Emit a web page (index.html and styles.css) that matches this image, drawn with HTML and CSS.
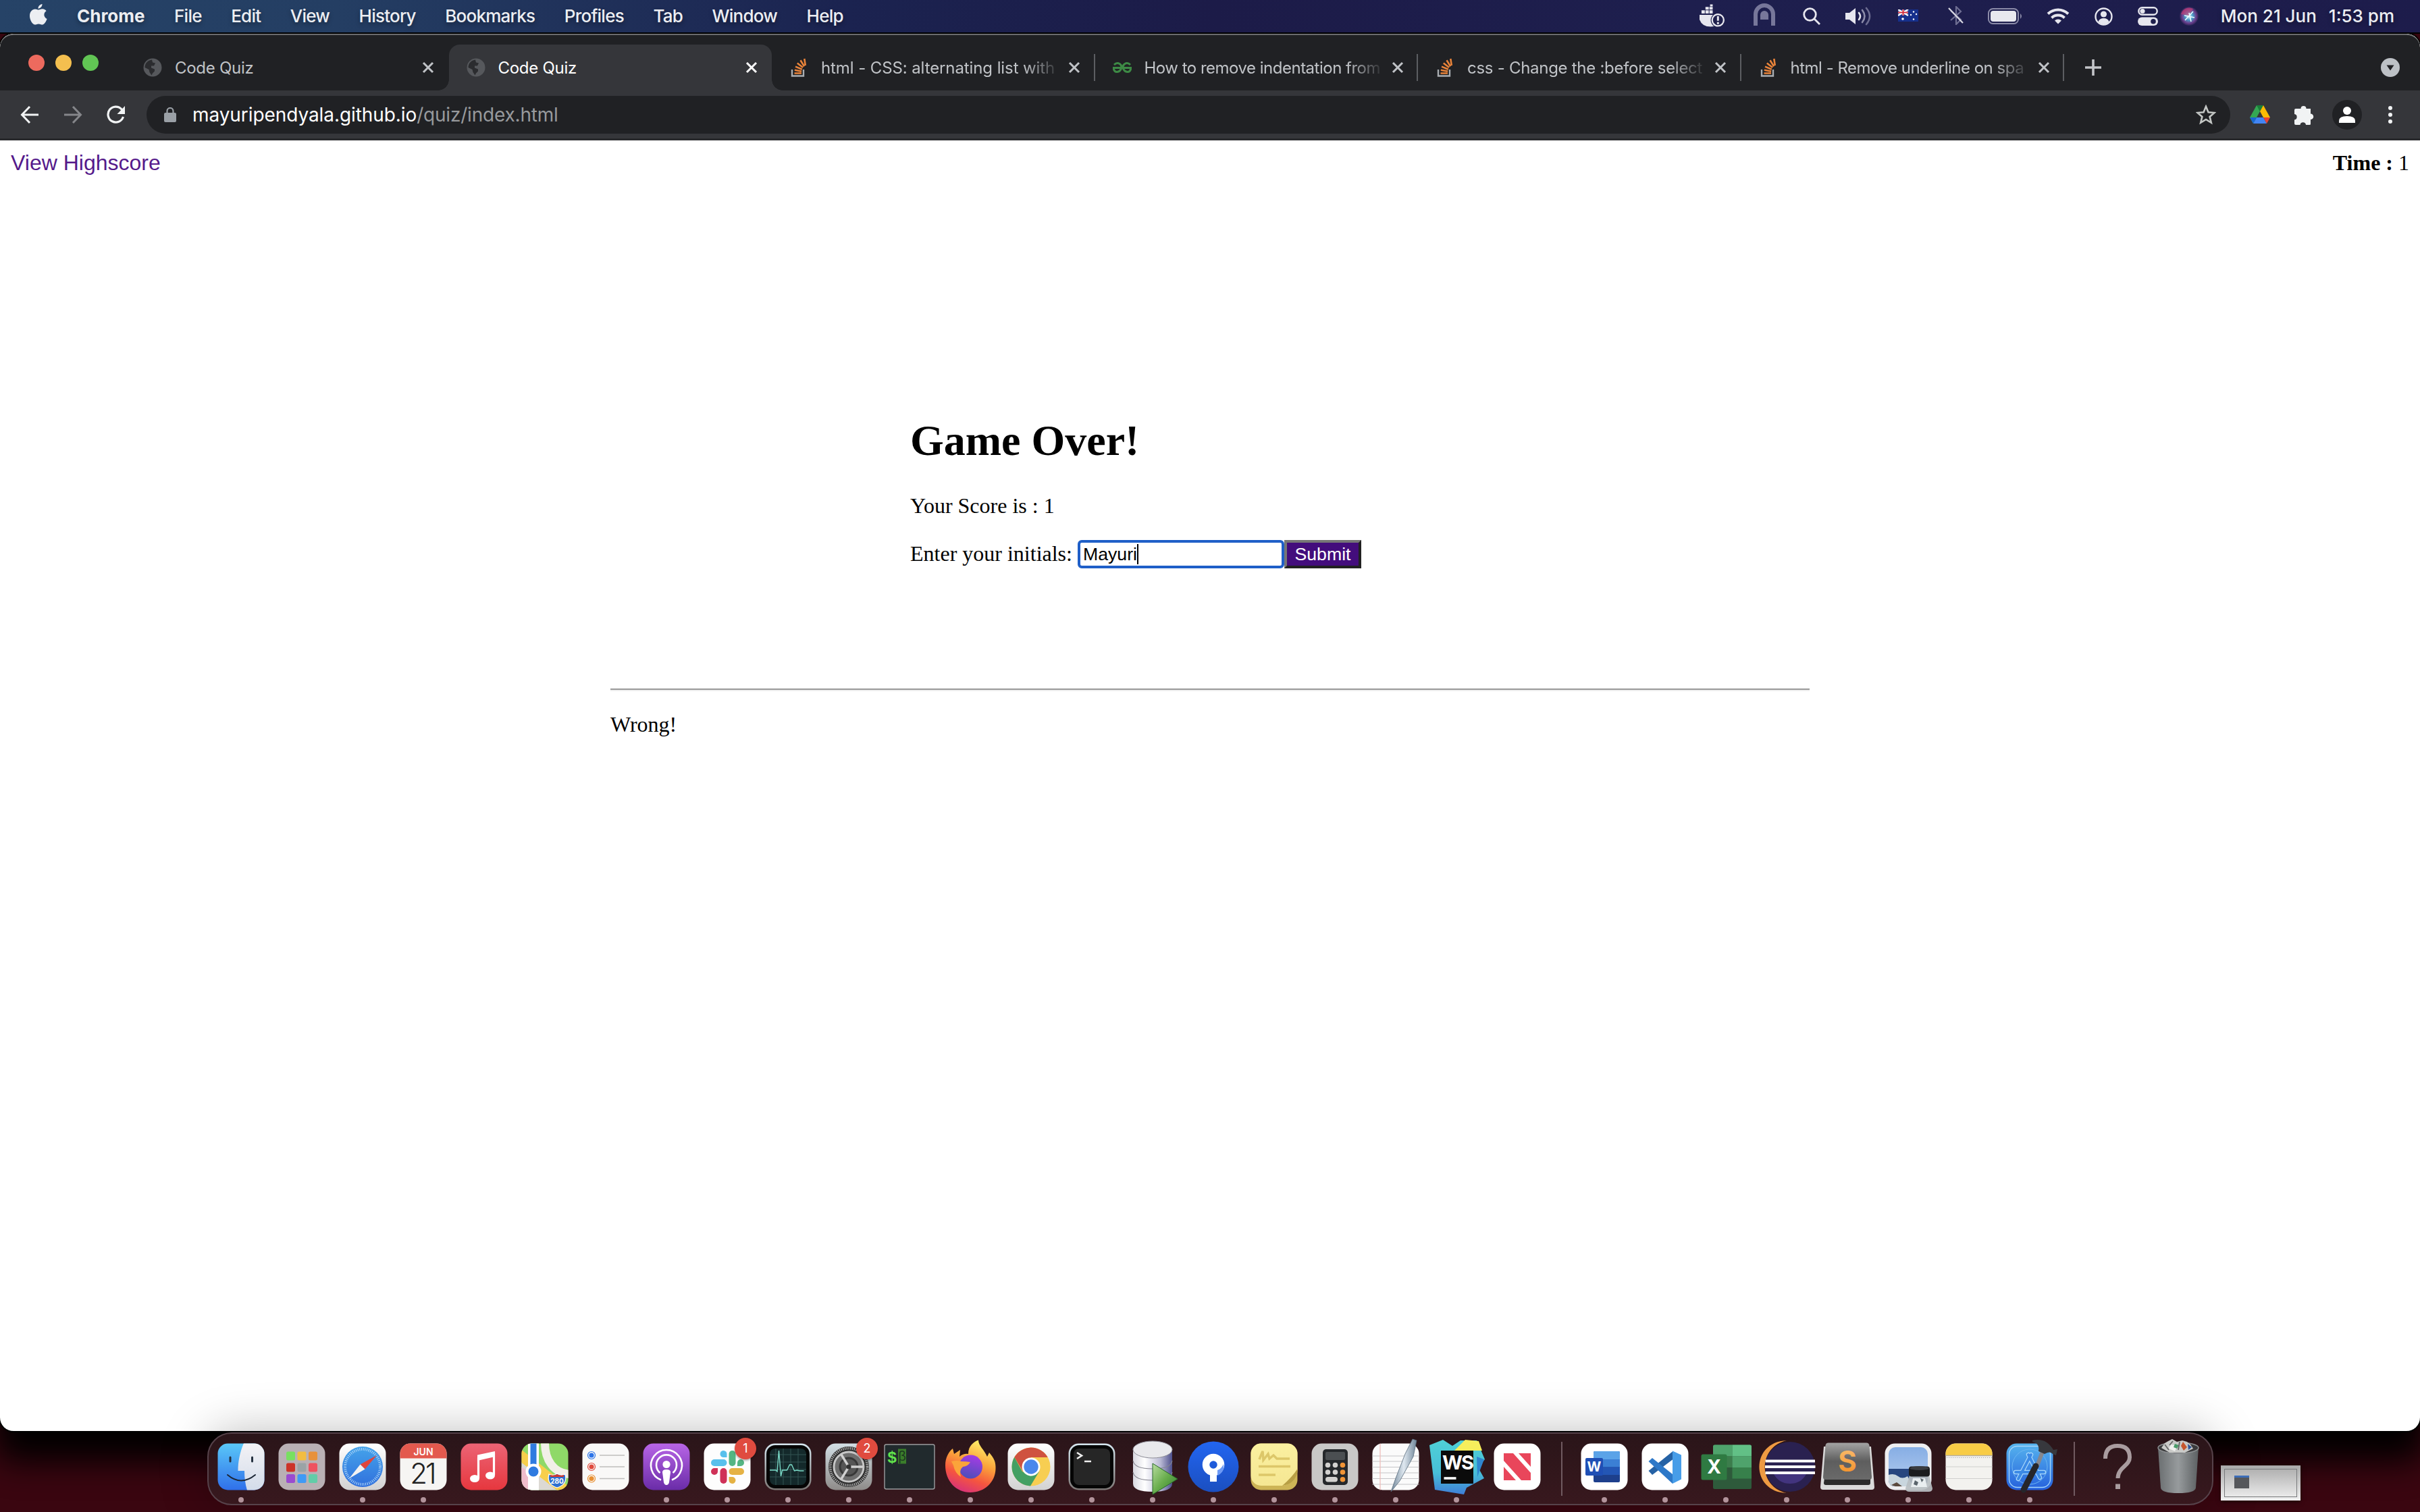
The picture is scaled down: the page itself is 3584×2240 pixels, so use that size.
FILE: index.html
```html
<!DOCTYPE html>
<html lang="en">
<head>
<meta charset="utf-8">
<title>Code Quiz</title>
<link rel="stylesheet" href="styles.css">
</head>
<body>
<svg class="defs" width="0" height="0">
  <defs>
    <linearGradient id="gFinder" x1="0" y1="0" x2="0" y2="1"><stop offset="0" stop-color="#5ac8f8"/><stop offset="1" stop-color="#2f6fea"/></linearGradient>
    <linearGradient id="gFace" x1="0" y1="0" x2="0" y2="1"><stop offset="0" stop-color="#f3f2f5"/><stop offset="1" stop-color="#d3dcea"/></linearGradient>
    <linearGradient id="gSilver" x1="0" y1="0" x2="0" y2="1"><stop offset="0" stop-color="#ffffff"/><stop offset="1" stop-color="#d2d2d2"/></linearGradient>
    <linearGradient id="gSafari" x1="0" y1="0" x2="0" y2="1"><stop offset="0" stop-color="#45a3ea"/><stop offset="1" stop-color="#3070dd"/></linearGradient>
    <linearGradient id="gRed" x1="0" y1="0" x2="0" y2="1"><stop offset="0" stop-color="#ec6475"/><stop offset="1" stop-color="#e6373e"/></linearGradient>
    <linearGradient id="gPod" x1="0" y1="0" x2="0" y2="1"><stop offset="0" stop-color="#b865e6"/><stop offset="1" stop-color="#6a2ca8"/></linearGradient>
    <linearGradient id="gRim" x1="0" y1="0" x2="0" y2="1"><stop offset="0" stop-color="#d5e6ef"/><stop offset="1" stop-color="#7b7674"/></linearGradient>
    <linearGradient id="gPref" x1="0" y1="0" x2="0" y2="1"><stop offset="0" stop-color="#d3dfe5"/><stop offset="1" stop-color="#8e8b89"/></linearGradient>
    <linearGradient id="gFox" x1=".7" y1="0" x2=".3" y2="1"><stop offset="0" stop-color="#fff36b"/><stop offset=".4" stop-color="#fba23a"/><stop offset=".7" stop-color="#f5553f"/><stop offset="1" stop-color="#d6307c"/></linearGradient>
    <linearGradient id="gFoxIn" x1="0.6" y1="0" x2=".3" y2="1"><stop offset="0" stop-color="#a53be4"/><stop offset="1" stop-color="#4a4fb8"/></linearGradient>
    <linearGradient id="gDb" x1="0" y1="0" x2="1" y2="0"><stop offset="0" stop-color="#d8d8e0"/><stop offset=".3" stop-color="#ffffff"/><stop offset=".7" stop-color="#b9b9d4"/><stop offset="1" stop-color="#4d4f8c"/></linearGradient>
    <linearGradient id="gPlay" x1="0" y1="0" x2="1" y2="1"><stop offset="0" stop-color="#b8dca0"/><stop offset=".5" stop-color="#68ad4c"/><stop offset="1" stop-color="#2c7a2c"/></linearGradient>
    <linearGradient id="gTree" x1="0" y1="0" x2="0" y2="1"><stop offset="0" stop-color="#2265f0"/><stop offset="1" stop-color="#1b4fc0"/></linearGradient>
    <linearGradient id="gNote" x1="0" y1="0" x2="0" y2="1"><stop offset="0" stop-color="#fbf0a0"/><stop offset="1" stop-color="#f5e793"/></linearGradient>
    <linearGradient id="gPen" x1="0" y1="0" x2="1" y2="0"><stop offset="0" stop-color="#6f8598"/><stop offset=".5" stop-color="#dfe8f0"/><stop offset="1" stop-color="#6f8598"/></linearGradient>
    <linearGradient id="gWs" x1="0" y1="0" x2="0" y2="1"><stop offset="0" stop-color="#4fd0d6"/><stop offset=".6" stop-color="#48bfd8"/><stop offset="1" stop-color="#3f7fd8"/></linearGradient>
    <linearGradient id="gSub" x1="0" y1="0" x2="0" y2="1"><stop offset="0" stop-color="#a3a3a3"/><stop offset=".5" stop-color="#5e5e5e"/><stop offset="1" stop-color="#6a6a6a"/></linearGradient>
    <linearGradient id="gSubS" x1="0" y1="0" x2="0" y2="1"><stop offset="0" stop-color="#fbc276"/><stop offset="1" stop-color="#f08a20"/></linearGradient>
    <linearGradient id="gSky" x1="0" y1="0" x2="0" y2="1"><stop offset="0" stop-color="#87aee4"/><stop offset="1" stop-color="#b4cdf0"/></linearGradient>
    <linearGradient id="gXc" x1="0" y1="0" x2="0" y2="1"><stop offset="0" stop-color="#56b4ee"/><stop offset="1" stop-color="#2560dc"/></linearGradient>
    <linearGradient id="gBin" x1="0" y1="0" x2="1" y2="0"><stop offset="0" stop-color="#6a6e70"/><stop offset=".5" stop-color="#979b9d"/><stop offset="1" stop-color="#5c6062"/></linearGradient>
    <radialGradient id="gSiri"><stop offset="0" stop-color="#d8f4ff"/><stop offset=".4" stop-color="#4a9dc8"/><stop offset=".75" stop-color="#6b3d8c"/><stop offset="1" stop-color="#2a2455"/></radialGradient>
    <clipPath id="tile"><rect x="10.500" y="10.500" width="69" height="69" rx="15"/></clipPath>
    <symbol id="globe" viewBox="0 0 28 28"><circle cx="14" cy="14" r="13.500" fill="#56585c"/><path d="M13 2.500c-6 .8-10.500 5.300-10.500 11.500l6 3 1 4 3 4.500 1.500-3 3-3v-3l-5-2v-3h4l2-4-4-1z" fill="#2b2c2f"/></symbol>
    <symbol id="close" viewBox="0 0 20 20"><path d="M3 3l14 14M17 3L3 17" stroke="currentColor" stroke-width="3" fill="none"/></symbol>
    <symbol id="stack" viewBox="0 0 28 28"><path d="M4 17v9.500h17V17" fill="none" stroke="#a9adb1" stroke-width="2.400"/><path d="M7.500 22.500h10.500M7.800 17.800l10.300 2M9 12.600l9.800 4.200M11.800 7.500l8.300 6.600M16.500 3.200l5.600 9M22.300 1l1.500 10" stroke="#e8833a" stroke-width="2.600" fill="none"/></symbol>
  </defs>
</svg>

<div class="desktop">
  <header class="menubar">
    <svg class="apple" viewBox="0 0 26 32"><path d="M18.500 0c.2 3-2.600 6.800-6 6.700C12.200 3.600 15.200.4 18.500 0zM13 8.600c1.500 0 3.200-1.500 6-1.300 2.600.2 4.500 1.300 5.600 3-4.800 3-4 9.600 1 11.600-1.300 3.900-4.200 8.600-7.100 8.700-2 0-2.900-1.200-5.300-1.200-2.400 0-3.400 1.200-5.300 1.200C4 30.500 0 23.500 0 17.500c0-6.200 4-10 8-10 2.300 0 3.700 1.100 5 1.100z"/></svg>
    <nav class="menus">
      <span class="app">Chrome</span><span>File</span><span>Edit</span><span>View</span><span>History</span><span>Bookmarks</span><span>Profiles</span><span>Tab</span><span>Window</span><span>Help</span>
    </nav>
    <div class="status">
      <svg class="s-docker" viewBox="0 0 40 36"><g fill="#e6e6ee"><path d="M0 16h30l-4 13q-2 5-9 5-13 0-17-11z"/><path d="M3 9h5v5H3zM9 9h5v5H9zM15 9h5v5h-5zM9 4h5v4H9zM15 4h5v4h-5zM16 0h4v3h-4z"/></g><circle cx="28" cy="24" r="11" fill="#1e1f4c"/><circle cx="28" cy="24" r="8.800" fill="none" stroke="#e6e6ee" stroke-width="2.400"/><path d="M28 18v7M28 27v3" stroke="#e6e6ee" stroke-width="3"/></svg>
      <svg class="s-arch" viewBox="0 0 34 34"><path d="M4 33V16a13 13 0 0 1 26 0v17" fill="none" stroke="#77779a" stroke-width="6"/><path d="M11 24v-7a6 6 0 0 1 12 0v7z" fill="#77779a"/></svg>
      <svg class="s-search" viewBox="0 0 26 26"><circle cx="10.500" cy="10.500" r="8.800"/><path d="M17 17l8 8"/></svg>
      <svg class="s-vol" viewBox="0 0 38 28"><path d="M0 9h6l9-7v24l-9-7H0z" fill="#e6e6ee"/><g fill="none" stroke-width="2.600" stroke-linecap="round"><path d="M20 9q4 5 0 10" stroke="#e6e6ee"/><path d="M25 5q7 9 0 18" stroke="#8d8daa"/><path d="M31 2q10 12 0 24" stroke="#6c6c90"/></g></svg>
      <svg class="s-flag" viewBox="0 0 30 18"><path d="M0 0h30v18H0z" fill="#16308c"/><path d="M0 0l15 9M15 0L0 9" stroke="#fff" stroke-width="2.500"/><path d="M7.500 0v9M0 4.500h15" stroke="#fff" stroke-width="3"/><path d="M7.500 0v9M0 4.500h15" stroke="#d02c3c" stroke-width="2"/><g fill="#fff"><circle cx="7" cy="14" r="1.800"/><circle cx="23" cy="3.500" r="1.200"/><circle cx="23" cy="14.500" r="1.200"/><circle cx="19" cy="8" r="1.200"/><circle cx="27" cy="7" r="1.200"/></g></svg>
      <svg class="s-bt" viewBox="0 0 24 28"><path d="M4 7l15 13-7 7V1l7 7L4 21" fill="none" stroke="#6e6e92" stroke-width="2.200"/><path d="M1 3l21 22" stroke="#d8d8e2" stroke-width="2.200"/></svg>
      <svg class="s-bat" viewBox="0 0 52 24"><rect x="1" y="1" width="44" height="22" rx="6.500" fill="none" stroke="#8b8ba8" stroke-width="2"/><rect x="4" y="4" width="38" height="16" rx="4" fill="#e8e8ee"/><path d="M48 8q4 4 0 8z" fill="#8b8ba8"/></svg>
      <svg class="s-wifi" viewBox="0 0 34 25"><g fill="none" stroke="#e6e6ee" stroke-width="4"><path d="M2 9.500a21.500 21.500 0 0 1 30 0"/><path d="M7.500 15.500a13.500 13.500 0 0 1 19 0"/></g><path d="M17 24.500l-5-5a7 7 0 0 1 10 0z" fill="#e6e6ee"/></svg>
      <svg class="s-user" viewBox="0 0 27 27"><circle cx="13.500" cy="13.500" r="12" fill="none" stroke="#e6e6ee" stroke-width="2.400"/><circle cx="13.500" cy="10" r="4.600" fill="#e6e6ee"/><path d="M5.500 21q2-5 8-5t8 5q-3 4-8 4t-8-4z" fill="#e6e6ee"/></svg>
      <svg class="s-cc" viewBox="0 0 30 28"><rect x="1.300" y="1.300" width="27.400" height="10.400" rx="5.200" fill="none" stroke="#e6e6ee" stroke-width="2.400"/><circle cx="7" cy="6.500" r="3.600" fill="#e6e6ee"/><rect y="15.500" width="30" height="12.500" rx="6.200" fill="#e6e6ee"/><circle cx="23" cy="21.700" r="3.800" fill="#1e1f4c"/></svg>
      <svg class="s-siri" viewBox="0 0 28 28"><circle cx="14" cy="14" r="14" fill="url(#gSiri)"/><path d="M2 11a12.500 12.500 0 0 1 18-8l-6 10z" fill="#c83c72" opacity=".65"/><path d="M8 20L20 7M7 13l15 3M14 9l3 13" stroke="#e8fbff" stroke-width="1.600"/></svg>
      <span class="date">Mon 21 Jun</span><span class="clock">1:53 pm</span>
    </div>
  </header>

  <main class="window">
    <div class="tabstrip">
      <div class="lights"><i class="red"></i><i class="yellow"></i><i class="green"></i></div>
      <div class="tab"><svg class="fav"><use href="#globe"/></svg><span class="title">Code Quiz</span><svg class="x"><use href="#close"/></svg></div>
      <div class="tab active"><svg class="fav"><use href="#globe"/></svg><span class="title">Code Quiz</span><svg class="x"><use href="#close"/></svg></div>
      <div class="tab sep"><svg class="fav"><use href="#stack"/></svg><span class="title t-wide">html - CSS: alternating list with</span><svg class="x"><use href="#close"/></svg></div>
      <div class="tab sep"><svg class="fav" viewBox="0 0 28 28"><g fill="none" stroke="#3d8a45" stroke-width="3"><path d="M2 10q4-4 8-1.500t2.500 7-6 5T1 14.500h11.500"/><path d="M26 10q-4-4-8-1.500t-2.500 7 6 5 5.500-6H15.500"/></g></svg><span class="title t-tight">How to remove indentation from</span><svg class="x"><use href="#close"/></svg></div>
      <div class="tab sep"><svg class="fav"><use href="#stack"/></svg><span class="title">css - Change the :before select</span><svg class="x"><use href="#close"/></svg></div>
      <div class="tab sep"><svg class="fav"><use href="#stack"/></svg><span class="title t-tight">html - Remove underline on spa</span><svg class="x"><use href="#close"/></svg></div>
      <svg class="plus" viewBox="0 0 26 26"><path d="M13 1v24M1 13h24" stroke="#c3c5c9" stroke-width="3.600"/></svg>
      <svg class="search-tabs" viewBox="0 0 28 28"><circle cx="14" cy="14" r="14" fill="#bdc1c6"/><path d="M8.500 10.500h11L14 18.500z" fill="#202124"/></svg>
    </div>
    <div class="toolbar">
      <svg class="nav" viewBox="0 0 28 28"><path d="M27 14H3M14 2L2.500 14 14 26" fill="none" stroke="#f1f3f4" stroke-width="3"/></svg>
      <svg class="nav fwd" viewBox="0 0 28 28"><path d="M1 14h24M14 2l11.500 12L14 26" fill="none" stroke="#85868a" stroke-width="3"/></svg>
      <svg class="nav rel" viewBox="0 0 28 28"><path d="M24.500 17A11.500 11.500 0 1 1 22 5.800L25 9" fill="none" stroke="#f1f3f4" stroke-width="3.200"/><path d="M27 1v12H15.500z" fill="#f1f3f4"/></svg>
      <div class="omnibox">
        <svg class="lock" viewBox="0 0 18 22"><rect y="8" width="18" height="14" rx="2" fill="#9aa0a6"/><path d="M4.500 9V5.500a4.500 4.500 0 0 1 9 0V9" fill="none" stroke="#9aa0a6" stroke-width="2.200"/></svg>
        <span class="url">mayuripendyala.github.io<span class="path">/quiz/index.html</span></span>
        <svg class="star" viewBox="0 0 30 30"><path d="M15 2.800l3.500 8.500 9 .7-6.900 5.900 2.200 8.900L15 22l-7.800 4.800 2.200-8.900L2.500 12l9-.7z" fill="none" stroke="#c4c7c5" stroke-width="2.600"/></svg>
      </div>
      <svg class="drive" viewBox="0 0 30 27"><path d="M10 0h10l-5 9z" fill="#188038"/><path d="M10 0l5 9L5 27 0 18z" fill="#34a853"/><path d="M20 0l10 18H20L15 9z" fill="#fbbc04"/><path d="M10 18h10l5 9H5z" fill="#4285f4"/><path d="M0 18h10L5 27z" fill="#1967d2"/><path d="M20 18h10l-5 9z" fill="#ea4335"/></svg>
      <svg class="puzzle" viewBox="0 0 30 30"><path d="M3 6h7.500a4 4 0 0 1 8 0H25v7.500a4.200 4.200 0 0 1 0 8.500v6.500q0 1.500-1.500 1.500H18a4.300 4.300 0 0 0-8.500 0H3q-2 0-2-2v-5.500a4.300 4.300 0 0 0 0-8.500V8q0-2 2-2z" fill="#f1f3f4"/></svg>
      <svg class="avatar" viewBox="0 0 44 44"><circle cx="22" cy="22" r="22" fill="#202124"/><circle cx="22" cy="16" r="6" fill="#fff"/><path d="M10 34v-3q0-7 12-7t12 7v3z" fill="#fff"/></svg>
      <svg class="dots" viewBox="0 0 8 28"><g fill="#f1f3f4"><circle cx="4" cy="4" r="3"/><circle cx="4" cy="14" r="3"/><circle cx="4" cy="24" r="3"/></g></svg>
    </div>
    <section class="page">
      <div class="pagehead"><a class="high">View Highscore</a><span class="time"><b>Time :</b> 1</span></div>
      <div class="result">
        <h1>Game Over!</h1>
        <p>Your Score is : 1</p>
        <div class="form"><label>Enter your initials:</label><div class="field">Mayuri<i class="caret"></i></div><button class="submit">Submit</button></div>
      </div>
      <div class="verdict"><hr><p>Wrong!</p></div>
    </section>
  </main>

  <footer class="bottom">
    <div class="dock">
      <div class="item run"><svg viewBox="0 0 90 90"><g clip-path="url(#tile)"><path d="M10 10h70v70H10z" fill="url(#gFinder)"/><path d="M49 10C43 24 40.500 38 40.500 51H50q0 16 4 29h26V10z" fill="url(#gFace)"/></g><path d="M29 31v6M61.500 31v6" stroke="#24303f" stroke-width="3" stroke-linecap="round"/><path d="M25 57q20 17 41 0" fill="none" stroke="#1c2736" stroke-width="2" stroke-linecap="round"/></svg></div>
      <div class="item"><svg viewBox="0 0 90 90"><rect x="10.500" y="10.500" width="69" height="69" rx="15" fill="#b9b0b4"/><g><rect x="22" y="22.500" width="13" height="13" rx="2.500" fill="#78e060"/><rect x="38.500" y="22.500" width="13" height="13" rx="2.500" fill="#f2bd42"/><rect x="55" y="22.500" width="13" height="13" rx="2.500" fill="#e8913a"/><rect x="22" y="39.500" width="13" height="13" rx="2.500" fill="#cc3328"/><rect x="38.500" y="39.500" width="13" height="13" rx="2.500" fill="#9ba3a6"/><rect x="55" y="39.500" width="13" height="13" rx="2.500" fill="#ee5260"/><rect x="22" y="56" width="13" height="13" rx="2.500" fill="#9a4bd0"/><rect x="38.500" y="56" width="13" height="13" rx="2.500" fill="#3f9af5"/><rect x="55" y="56" width="13" height="13" rx="2.500" fill="#62cda8"/></g></svg></div>
      <div class="item run"><svg viewBox="0 0 90 90"><rect x="10.500" y="10.500" width="69" height="69" rx="15" fill="url(#gSilver)"/><circle cx="45" cy="45" r="30" fill="url(#gSafari)"/><circle cx="45" cy="45" r="26" fill="none" stroke="#b5daf8" stroke-width="4" stroke-dasharray="1 1.720"/><path d="M66 28L48.500 48.500 41.500 41.500z" fill="#e0453c"/><path d="M25 62.500L41.500 41.500l7 7z" fill="#f2f2f2"/></svg></div>
      <div class="item run"><svg viewBox="0 0 90 90"><g clip-path="url(#tile)"><path d="M10 10h70v70H10z" fill="#f6f5f3"/><path d="M10 10h70v22.500H10z" fill="#e3594e"/></g><text class="jun" x="45" y="27.500">JUN</text><text class="day" x="43.500" y="70">21</text></svg></div>
      <div class="item"><svg viewBox="0 0 90 90"><rect x="10.500" y="10.500" width="69" height="69" rx="15" fill="url(#gRed)"/><path d="M36.500 62V32.500l23-6.500v31" fill="none" stroke="#fff" stroke-width="3.200"/><path d="M35 27.500L61 22v8L35 36z" fill="#fff"/><ellipse cx="31" cy="62.500" rx="7" ry="5.500" fill="#fff"/><ellipse cx="54" cy="58" rx="7" ry="5.500" fill="#fff"/></svg></div>
      <div class="item"><svg viewBox="0 0 90 90"><g clip-path="url(#tile)"><path d="M10 10h70v70H10z" fill="#8fd968"/><path d="M45 10c0 25 13 44 36 46" fill="none" stroke="#f2efe8" stroke-width="12"/><path d="M10 38v42h55z" fill="#dcd9d3"/><path d="M10 45l12 8v27H10z" fill="#f0bccb"/><path d="M6 26l72 56" stroke="#f7cf4c" stroke-width="15"/><path d="M28 10v70" stroke="#fff" stroke-width="16"/><path d="M28 10v34" stroke="#2f7be0" stroke-width="9"/></g><circle cx="28" cy="52" r="11.500" fill="#fff"/><circle cx="28" cy="52" r="7.500" fill="#2f7be0"/><path d="M51 56q6 3 12-1 6 4 12 1 4 15-12 20-16-5-12-20z" fill="#2e6fd0" stroke="#fff" stroke-width="1.200"/><path d="M53 57q5 2 10-1 5 3 10 1v3H53z" fill="#d0392e"/><text class="hwy" x="63" y="70">280</text></svg></div>
      <div class="item"><svg viewBox="0 0 90 90"><rect x="10.500" y="10.500" width="69" height="69" rx="15" fill="#f9f8f7"/><path d="M36 28h37M36 45h37M36 62.500h37" stroke="#bfbdbc" stroke-width="1.300"/><g fill="none" stroke-width="1.200"><circle cx="24" cy="28" r="5.500" stroke="#2d74e8"/><circle cx="24" cy="45" r="5.500" stroke="#e04a3d"/><circle cx="24" cy="62.500" r="5.500" stroke="#e88f30"/></g><circle cx="24" cy="28" r="3.600" fill="#2d74e8"/><circle cx="24" cy="45" r="3.600" fill="#e04a3d"/><circle cx="24" cy="62.500" r="3.600" fill="#e88f30"/></svg></div>
      <div class="item run"><svg viewBox="0 0 90 90"><rect x="10.500" y="10.500" width="69" height="69" rx="15" fill="url(#gPod)"/><g fill="none" stroke="#fff" stroke-width="2.600"><path d="M37 64.500a23 23 0 1 1 16 0"/><path d="M35.500 54a15 15 0 1 1 19 0"/></g><circle cx="45" cy="41.500" r="5.600" fill="#fff"/><path d="M39 53q0-4 6-4t6 4l-2 15q-1 4-4 4t-4-4z" fill="#fff"/></svg></div>
      <div class="item run"><svg viewBox="0 0 90 90"><rect x="10.500" y="10.500" width="69" height="69" rx="15" fill="#fdfdfd"/><g stroke-width="10" stroke-linecap="round"><path d="M26 39h13.500" stroke="#58c0ec"/><path d="M52.500 26v13" stroke="#55b583"/><path d="M39.500 52v13" stroke="#cf3158"/><path d="M52.500 52H65" stroke="#e5b244"/></g><path d="M44.500 31H39a5 5 0 1 1 5.500-5z" fill="#58c0ec"/><path d="M60 44v-5a5 5 0 1 1 5 5z" fill="#55b583"/><path d="M31 47v5a5 5 0 1 1-5-5z" fill="#cf3158"/><path d="M47.500 60H53a5 5 0 1 1-5.500 5z" fill="#e5b244"/></svg><span class="badge">1</span></div>
      <div class="item run"><svg viewBox="0 0 90 90"><rect x="10.500" y="10.500" width="69" height="69" rx="15" fill="url(#gRim)"/><rect x="13" y="13" width="64" height="64" rx="13" fill="#050505"/><rect x="18" y="18" width="54" height="54" rx="8" fill="#14292b"/><path d="M27 18v54M38 18v54M49 18v54M60 18v54M18 27h54M18 38h54M18 49h54M18 60h54" stroke="#325452" stroke-width="1"/><path d="M18 50h9l2 2 2.500-31 3 38 2-9h7l4-8 3 0 4 9 4-1 4 1h6" fill="none" stroke="#7bdcc9" stroke-width="1.400"/></svg></div>
      <div class="item run"><svg viewBox="0 0 90 90"><rect x="10.500" y="10.500" width="69" height="69" rx="15" fill="url(#gPref)"/><circle cx="45" cy="45" r="30" fill="#2c2c2c"/><circle cx="45" cy="45" r="27.500" fill="none" stroke="#a9a9a9" stroke-width="4" stroke-dasharray="1.400 1.400"/><circle cx="45" cy="45" r="22" fill="#6e6e6e" stroke="#c6c6c6" stroke-width="3"/><circle cx="45" cy="45" r="13" fill="#555" stroke="#383838" stroke-width="3"/><path d="M45 45h21M45 45L34 27M45 45L34 63" stroke="#d0d0d0" stroke-width="3.400"/><circle cx="45" cy="45" r="3.500" fill="#333"/></svg><span class="badge">2</span></div>
      <div class="item run"><svg viewBox="0 0 90 90"><rect x="8" y="12" width="74" height="66" rx="2.500" fill="#212a2d" stroke="#9a9c9e" stroke-width="1.400"/><text class="dollar" x="12" y="38.500">$</text><rect x="28" y="18.500" width="12" height="22" fill="#3b7d2b"/><text class="beta" x="28" y="36">β</text></svg></div>
      <div class="item run"><svg viewBox="0 0 90 90"><path d="M8 43c0-12 5-20 11-25l2 8 9-6-1 10q6-5 13-4C42 14 50 8 57 5.500 57 14 66 20 70 30l3-6c7 8 10 14 9.500 24C82 68 66 83 45 83S8 66 8 43z" fill="url(#gFox)"/><circle cx="45.500" cy="45" r="17.500" fill="url(#gFoxIn)"/><path d="M17 37q8-2 14 0 8 0 14 1-3 6-11 7-6 5-3 15-9-6-11-17z" fill="#fba43a"/></svg></div>
      <div class="item run"><svg viewBox="0 0 90 90"><rect x="10.500" y="10.500" width="69" height="69" rx="15" fill="url(#gSilver)"/><circle cx="45" cy="45" r="28.500" fill="#f7ce52"/><path d="M45 31h24.700A28.500 28.500 0 0 0 20.300 30.800L33 52z" fill="#cf5240"/><path d="M20.300 30.800A28.500 28.500 0 0 0 44 73.500L57 52 45 58.500 32 52z" fill="#43a063"/><circle cx="45" cy="45" r="13.500" fill="#fff"/><circle cx="45" cy="45" r="10.700" fill="#4a87ec"/></svg></div>
      <div class="item run"><svg viewBox="0 0 90 90"><rect x="10.500" y="10.500" width="69" height="69" rx="15" fill="url(#gRim)"/><rect x="13" y="13" width="64" height="64" rx="13" fill="#050505"/><rect x="18" y="18" width="54" height="54" rx="8" fill="#262626"/><path d="M23 24l7 4.500-7 4.500M34 37h10" fill="none" stroke="#f0f0f0" stroke-width="2.600"/></svg></div>
      <div class="item run"><svg viewBox="0 0 90 90"><path d="M16 20v50q0 12 29 12t29-12V20z" fill="url(#gDb)"/><ellipse cx="45" cy="19.500" rx="29" ry="12.500" fill="#e9e9ec" stroke="#8c8c96" stroke-width="1"/><path d="M16 36q2 12 29 12t29-12M16 53q2 12 29 12t29-12" fill="none" stroke="#85858f" stroke-width="1.200"/><path d="M45 40l37 23-37 23z" fill="url(#gPlay)" stroke="#28692a" stroke-width="1"/></svg></div>
      <div class="item run"><svg viewBox="0 0 90 90"><circle cx="45" cy="45" r="37.500" fill="url(#gTree)"/><circle cx="45" cy="42" r="11" fill="none" stroke="#fff" stroke-width="10.500"/><path d="M45 48v19" stroke="#fff" stroke-width="10"/><path d="M51 50q6-2 9-9 2 12-9 17z" fill="#6d9af5"/></svg></div>
      <div class="item run"><svg viewBox="0 0 90 90"><rect x="10.500" y="10.500" width="69" height="69" rx="15" fill="#cdb456"/><path d="M25.500 10.500h39a15 15 0 0 1 15 15V50Q72 72 57 73H25.500a15 15 0 0 1-15-15V25.500a15 15 0 0 1 15-15z" fill="url(#gNote)"/><path d="M79.500 48Q72 60 57 73q18-2 22.500-20z" fill="#b89f45"/><path d="M23 34l5-12 1 13 7-9 2 7 6-5 5 5h19M22 44.500h47M22 57h25" fill="none" stroke="#ddc769" stroke-width="3.500"/></svg></div>
      <div class="item run"><svg viewBox="0 0 90 90"><rect x="10.500" y="10.500" width="69" height="69" rx="15" fill="#c9c8c7"/><rect x="27" y="19" width="37" height="53" rx="5" fill="#25282b"/><rect x="31" y="23" width="29" height="12" rx="2" fill="#4b4f52"/><g fill="#d2d1cf"><circle cx="34.500" cy="42.500" r="3.800"/><circle cx="45.500" cy="42.500" r="3.800"/><circle cx="34.500" cy="53" r="3.800"/><circle cx="45.500" cy="53" r="3.800"/><rect x="31" y="60" width="18" height="7.500" rx="3.700"/></g><g fill="#f09436"><circle cx="56.500" cy="42.500" r="3.800"/><circle cx="56.500" cy="53" r="3.800"/><circle cx="56.500" cy="63.700" r="3.800"/></g></svg></div>
      <div class="item run"><svg viewBox="0 0 90 90"><rect x="10.500" y="10.500" width="69" height="69" rx="15" fill="#fbfbfb"/><path d="M10.500 29h69M10.500 37h69M10.500 45.500h69M10.500 54h69M10.500 62.500h69M10.500 71h69" stroke="#c5c5c8" stroke-width="1.200"/><path d="M22 10.500v69" stroke="#eeb9b6" stroke-width="1.200"/><path d="M70 4l6 2-5 24-20 36-13 16 7-20 14-36z" fill="url(#gPen)" stroke="#586b7c" stroke-width=".8"/></svg></div>
      <div class="item run"><svg viewBox="0 0 90 90"><path d="M5 13l20-8 14 9 12-8 24 0 12 28-10 12 9 16-26 14-4 10-43-7z" fill="url(#gWs)"/><path d="M42 21L58 5l20 2 5 14z" fill="#f6ee5c"/><path d="M75 30l11 4-10 26z" fill="#2f86cf"/><rect x="22" y="21" width="48" height="49" fill="#0b0b0b"/><path d="M26.500 62h18" stroke="#fff" stroke-width="3.600"/><text class="ws" x="24" y="48.500">WS</text></svg></div>
      <div class="item"><svg viewBox="0 0 90 90"><rect x="10.500" y="10.500" width="69" height="69" rx="15" fill="#fff"/><g fill="#e9465b"><path d="M25 25h14l26 29v11H51L25 36z"/><path d="M47 25h18v20zM25 45l18 20H25z"/></g></svg></div>
      <i class="divider"></i>
      <div class="item run"><svg viewBox="0 0 90 90"><rect x="10.500" y="10.500" width="69" height="69" rx="15" fill="#fff"/><rect x="29" y="22" width="39" height="46" rx="2" fill="#1d3f8c"/><path d="M29 24q0-2 2-2h35q2 0 2 2v10H29z" fill="#5ba3e8"/><path d="M29 34h39v11.500H29z" fill="#3b7fd4"/><path d="M29 45.500h39V57H29z" fill="#2356b5"/><rect x="17" y="32" width="26" height="26" rx="2" fill="#1f4fb5"/><text class="word" x="30" y="52">W</text></svg></div>
      <div class="item run"><svg viewBox="0 0 90 90"><rect x="10.500" y="10.500" width="69" height="69" rx="15" fill="#fff"/><path d="M20.500 51l36-29v12L26 57z" fill="#2562a5"/><path d="M20.500 37l5.500-5L56 56v14z" fill="#2d78c8"/><path d="M56 21.500l13 6v36L56 70z" fill="#479de8"/></svg></div>
      <div class="item run"><svg viewBox="0 0 90 90"><rect x="26" y="12.500" width="57" height="65.500" rx="2.500" fill="#2e5a3b"/><path d="M26 15q0-2.500 2.500-2.500H54.500v17H26z" fill="#4fa36c"/><path d="M54.500 12.500H80.500q2.500 0 2.500 2.500v14.500H54.500z" fill="#62c086"/><path d="M26 29.500h28.500v16.500H26z" fill="#3c7d4c"/><path d="M54.500 29.500H83v16.500H54.500z" fill="#4fa36c"/><path d="M54.500 46H83v16.500H54.500z" fill="#37804b"/><rect x="8.500" y="26.500" width="38" height="38" rx="2.500" fill="#2f7a42"/><text class="excel" x="27.500" y="55">X</text></svg></div>
      <div class="item run"><svg viewBox="0 0 90 90"><path d="M45 6C-9 8-9 82 45 84 2 74 2 16 45 6z" fill="#ee9a42"/><circle cx="50" cy="45" r="37" fill="#2a2150"/><path d="M26 56h48q-8 14-24 14T26 56z" fill="#42347e"/><path d="M13.500 36.500h73.500M13 45h74.500M13.500 54h73.500" stroke="#fff" stroke-width="4.200"/></svg></div>
      <div class="item run"><svg viewBox="0 0 90 90"><path d="M10 15h70l5 60q0 4-4 4H9q-4 0-4-4z" fill="#dadada"/><path d="M11 62h68v7q0 3-3 3H13q-3 0-3-3z" fill="#2b2b2b"/><path d="M17 9.500h56q4 0 4.500 4L81 60q0 4-3 4H12q-3 0-3-4l3.500-46.500q.5-4 4.500-4z" fill="url(#gSub)"/><text class="sub" x="45" y="52">S</text></svg></div>
      <div class="item run"><svg viewBox="0 0 90 90"><rect x="10.500" y="10.500" width="69" height="69" rx="15" fill="#eeeef0"/><rect x="16" y="16" width="58" height="58" rx="10" fill="url(#gSky)"/><path d="M16 48h58v16q0 10-10 10H26q-10 0-10-10z" fill="#27467f"/><path d="M16 57q8-3 14 2t14 0l8 15H26q-10 0-10-9z" fill="#c9d6de"/><path d="M20 72l8-4 8 6H26z" fill="#5b4a3e"/><path d="M47 58h29l5 19q0 5-6 5H47q-6 0-6-5z" fill="#b9bfc2" opacity=".92"/><path d="M52 62h18l3 13H49z" fill="#e9eef0"/><path d="M55 65l5 3-2 5-5-2zM63 62l5 2-3 4z" fill="#5a656c"/><rect x="46" y="44.500" width="31" height="15" rx="4" fill="#1b1c1e"/><ellipse cx="61.500" cy="47" rx="14" ry="3" fill="#3a3c40"/></svg></div>
      <div class="item run"><svg viewBox="0 0 90 90"><g clip-path="url(#tile)"><path d="M10 10h70v70H10z" fill="#f3f2ef"/><path d="M10 10h70v18H10z" fill="#f8cc46"/><path d="M10 28.500h70" stroke="#b5afa2" stroke-width="1.400"/><path d="M12 31.500h68" stroke="#aaa" stroke-width="1.200" stroke-dasharray="1.200 1.800"/><path d="M10 45h70M10 62.500h70" stroke="#d0cfcd" stroke-width="1.200"/></g></svg></div>
      <div class="item run"><svg viewBox="0 0 90 90"><rect x="10.500" y="10.500" width="69" height="69" rx="15" fill="url(#gXc)"/><rect x="14.500" y="14.500" width="61" height="61" rx="12" fill="none" stroke="#a5d6fa" stroke-width="1.300"/><circle cx="45" cy="45" r="26" fill="none" stroke="#6db6f2" stroke-width="1"/><g fill="none" stroke="#a8d8fb" stroke-width="6.500" stroke-linecap="round"><path d="M43 27l17 34M47 27L28 63M24 53h42"/></g><g fill="none" stroke="#3c8ae6" stroke-width="4" stroke-linecap="round"><path d="M43 27l17 34M47 27L28 63M24 53h42"/></g><path d="M65 20L55 46" stroke="#85878e" stroke-width="6"/><path d="M54 44L36 79" stroke="#26262b" stroke-width="9" stroke-linecap="round"/><path d="M49 6q20-5 31 14l6-1-2 9-5-2q-4-5-12 0l-9-4q2-12-9-14z" fill="#37383d"/></svg></div>
      <i class="divider second"></i>
      <div class="item"><svg viewBox="0 0 90 90"><path d="M27 33q0-19 18-19t18 17c0 13-17 14-17.500 31" fill="none" stroke="#a99c9f" stroke-width="6"/><path d="M42 70.500h7v7.500h-7z" fill="#a99c9f"/></svg></div>
      <div class="item"><svg viewBox="0 0 90 90"><path d="M15 16q15-6 30-6t30 6l-4 60q-1 8-26 8t-26-8z" fill="url(#gBin)"/><ellipse cx="45" cy="17" rx="30" ry="8" fill="#3b3b3d" stroke="#8d9092" stroke-width="1.500"/><path d="M20 17l5-7 5-3 6-3 7 4 8-2 7 2 5 4 4 6-12 6H32z" fill="#c9cac8"/><path d="M34 12l10 2-4 8-9-4z" fill="#f0f0ee"/><path d="M40 11l6 2-3 5-5-2z" fill="#4a9b6a"/><path d="M52 8l6 8-5 5-4-7z" fill="#c5562e"/><path d="M59 11l6 5-5 4z" fill="#2c5599"/><path d="M25 12l6 8M47 8l-2 12M37 7l-5 6" stroke="#666" stroke-width="1.800"/></svg></div>
    </div>
    <div class="thumb"><div class="shot"><i></i></div></div>
  </footer>
</div>
</body>
</html>
```
FILE: styles.css
```css
* { box-sizing: border-box; }
body { margin: 0; background: #000; }
svg { display: block; flex: none; }
i { font-style: normal; }
.defs { position: absolute; }

.desktop {
  width: 3584px; height: 2240px; overflow: hidden;
  display: flex; flex-direction: column;
  background: #3a0610;
  font-family: Inter, "Liberation Sans", sans-serif;
}

/* menu bar */
.menubar {
  height: 48px; flex: none; display: flex; align-items: center;
  padding: 0 38px 0 44px; margin-bottom: 2px;
  background: linear-gradient(90deg, #264367 0, #243e63 500px, #1b2350 1250px, #1c1b48 1800px, #1e1f4e 2500px, #1d1c4b 100%);
  box-shadow: 0 2px 0 #000; color: #eceef2; font-size: 26px; font-weight: 500;
  text-shadow: 0 3px 6px rgba(0,0,0,.35);
  white-space: nowrap; position: relative; z-index: 1;
}
.apple { width: 26px; height: 32px; fill: #eceef2; margin-right: 44px; margin-top: -4px; }
.menus { display: flex; gap: 43.5px; letter-spacing: -.77px; margin-top: -2px; }
.menus .app { font-weight: 700; letter-spacing: 0; }
.status { margin-left: auto; display: flex; align-items: center; }
.s-docker { width: 39px; height: 36px; margin-right: 40px; }
.s-arch { width: 34px; height: 34px; margin-right: 40px; margin-top: -4px; }
.s-search { width: 26px; height: 26px; margin-right: 37px; fill: none; stroke: #e6e6ee; stroke-width: 2.8px; }
.s-vol { width: 38px; height: 28px; margin-right: 40px; }
.s-flag { width: 30px; height: 18px; margin-right: 44px; margin-top: -2px; }
.s-bt { width: 24px; height: 28px; margin-right: 35px; margin-top: -2px; }
.s-bat { width: 52px; height: 24px; margin-right: 35px; }
.s-wifi { width: 34px; height: 25px; margin-right: 37px; margin-top: -2px; }
.s-user { width: 27px; height: 27px; margin-right: 37px; }
.s-cc { width: 30px; height: 28px; margin-right: 32px; }
.s-siri { width: 28px; height: 28px; margin-right: 33px; }
.date, .clock { margin-top: -2px; }
.clock { margin-left: 18px; }

/* browser window */
.window {
  height: 2070px; flex: none; display: flex; flex-direction: column;
  border-radius: 20px; overflow: hidden; background: #fff;
  box-shadow: 0 0 0 2px #000, 0 36px 50px 8px #000;
}
.tabstrip {
  height: 84px; flex: none; display: flex; align-items: flex-end;
  background: #202124; border-top: 2px solid #6a6b6e;
  border-radius: 20px 20px 0 0; font-size: 24px; color: #c0c3c7;
}
.lights { width: 186px; padding-left: 42px; display: flex; gap: 16px; align-self: flex-start; padding-top: 29px; }
.lights i { width: 24px; height: 24px; border-radius: 50%; }
.red { background: #ed6a5e; }
.yellow { background: #f4bf4f; }
.green { background: #61c554; }
.tab {
  width: 478.5px; height: 68px; padding-left: 26px; flex: none;
  display: flex; align-items: center; position: relative;
}
.fav { width: 28px; height: 28px; margin-right: 19px; }
.title { width: 350px; overflow: hidden; white-space: nowrap; letter-spacing: -.28px; }
.t-wide { letter-spacing: -.1px; }
.t-tight { letter-spacing: -.5px; }
.sep .title { -webkit-mask-image: linear-gradient(90deg, #000 300px, transparent 356px); mask-image: linear-gradient(90deg, #000 300px, transparent 356px); }
.x { width: 20px; height: 20px; margin-left: 15px; }
.active { background: #35363a; color: #fff; border-radius: 16px 16px 0 0; }
.active::before, .active::after {
  content: ""; position: absolute; bottom: 0; width: 16px; height: 16px;
}
.active::before { left: -16px; background: radial-gradient(circle at 0 0, #202124 15.5px, #35363a 16px); }
.active::after { right: -16px; background: radial-gradient(circle at 100% 0, #202124 15.5px, #35363a 16px); }
.sep { background: linear-gradient(#5c5e62, #5c5e62) 100% 50% / 2px 40px no-repeat; }
.plus { width: 26px; height: 26px; margin: 0 0 21px 30px; }
.search-tabs { width: 28px; height: 28px; margin: 0 30px 20px auto; }

.toolbar {
  height: 74px; flex: none; display: flex; align-items: center;
  background: #35363a; border-bottom: 3px solid #28292c; padding: 0 40px 0 30px;
}
.nav { width: 28px; height: 28px; margin-right: 36px; }
.rel { margin-right: 31px; }
.omnibox {
  width: 3087px; height: 56px; border-radius: 28px; background: #202124;
  display: flex; align-items: center; padding: 0 21px 0 26px; font-size: 28px;
}
.lock { width: 18px; height: 22px; margin-right: 24px; }
.url { color: #fff; white-space: nowrap; letter-spacing: -.08px; }
.path { color: #97999c; letter-spacing: -.2px; }
.star { width: 30px; height: 30px; margin-left: auto; }
.drive { width: 30px; height: 27px; margin-left: 29px; }
.puzzle { width: 30px; height: 30px; margin-left: 35px; }
.avatar { width: 44px; height: 44px; margin-left: 27px; }
.dots { width: 8px; height: 28px; margin-left: 38px; }

/* quiz page */
.page { flex: 1; font: 32px/36px "Liberation Serif", "Times New Roman", serif; color: #000; }
.pagehead { display: flex; justify-content: space-between; padding: 15px 16px 0; }
.high { font-family: "Liberation Sans", Arial, sans-serif; color: #551a8b; }
.result { margin: 357px 0 0 1348px; }
h1 { font-size: 64px; line-height: 74px; margin: 0 0 41px; }
p { margin: 0; }
.form { display: flex; align-items: center; margin-top: 33px; height: 42px; }
.form label { width: 248px; margin-top: -2px; }
.field {
  width: 306px; height: 42px; border: 4px solid #1f5fc8; border-radius: 6px;
  display: flex; align-items: center; padding-left: 4px;
  font: 26.667px/32px "Liberation Sans", Arial, sans-serif;
}
.caret { width: 2px; height: 30px; background: #000; }
.submit {
  width: 114px; height: 42px; padding: 0; border: 4px solid; border-radius: 0;
  border-color: #767676 #212121 #212121 #767676; background: #430d7c; color: #fff;
  font: 26.667px/32px "Liberation Sans", Arial, sans-serif;
}
.verdict { margin: 178px 904px 0; }
hr { margin: 0 0 31px; border: 0; height: 4px; border-top: 2px solid #999; border-bottom: 2px solid #eee; }

/* dock */
.bottom { display: flex; position: relative; padding: 2px 0 0 307px; align-items: flex-start; }
.dock {
  width: 2971px; height: 108px; border: 2px solid #56424a; border-radius: 36px;
  background: linear-gradient(#2a1519, #38181e); display: flex; padding-left: 3px;
  box-shadow: 0 0 70px rgba(0,0,0,.27);
}
.item { width: 90px; height: 104px; flex: none; padding-top: 4px; position: relative; }
.item svg { width: 90px; height: 90px; overflow: visible; }
.run::after {
  content: ""; display: block; width: 8px; height: 8px; margin: 0 auto;
  border-radius: 50%; background: #b2939b;
}
.divider { width: 2px; height: 80px; background: #705a60; margin: 12px 17px 0 20px; flex: none; }
.second { margin: 12px 18px 0 20px; }
.badge {
  position: absolute; left: 56px; top: 6px; width: 32px; height: 32px; border-radius: 50%;
  background: #e04b3f; color: #fff; font-size: 18px; line-height: 32px; text-align: center;
  box-shadow: 0 2px 3px rgba(0,0,0,.3);
}
text { font-family: Inter, sans-serif; fill: #fff; }
.jun { font-size: 14px; font-weight: 600; text-anchor: middle; }
.day { font-size: 42px; font-weight: 300; text-anchor: middle; fill: #222; letter-spacing: -3px; }
.hwy { font-size: 10px; font-weight: 700; text-anchor: middle; }
.dollar { font: 700 24px "Liberation Mono", monospace; fill: #62e44c; }
.beta { font: 20px "Liberation Mono", monospace; fill: #1d3a20; }
.ws { font-size: 29px; font-weight: 700; letter-spacing: -2px; }
.word { font-size: 20px; font-weight: 700; text-anchor: middle; }
.excel { font-size: 28px; font-weight: 700; text-anchor: middle; }
.sub { font-size: 42px; font-weight: 700; text-anchor: middle; fill: url(#gSubS); }
.thumb {
  width: 118px; height: 52px; margin: 49px 0 0 11px; padding: 5px;
  background: linear-gradient(#a9a9a9, #f2f2f2); box-shadow: 0 2px 6px rgba(0,0,0,.5);
}
.shot { height: 42px; border: 1px solid #77797b; padding: 9px 0 0 14px; }
.shot i { display: block; width: 22px; height: 19px; background: #55575b; border-top: 3px solid #3d6eb8; }
```
